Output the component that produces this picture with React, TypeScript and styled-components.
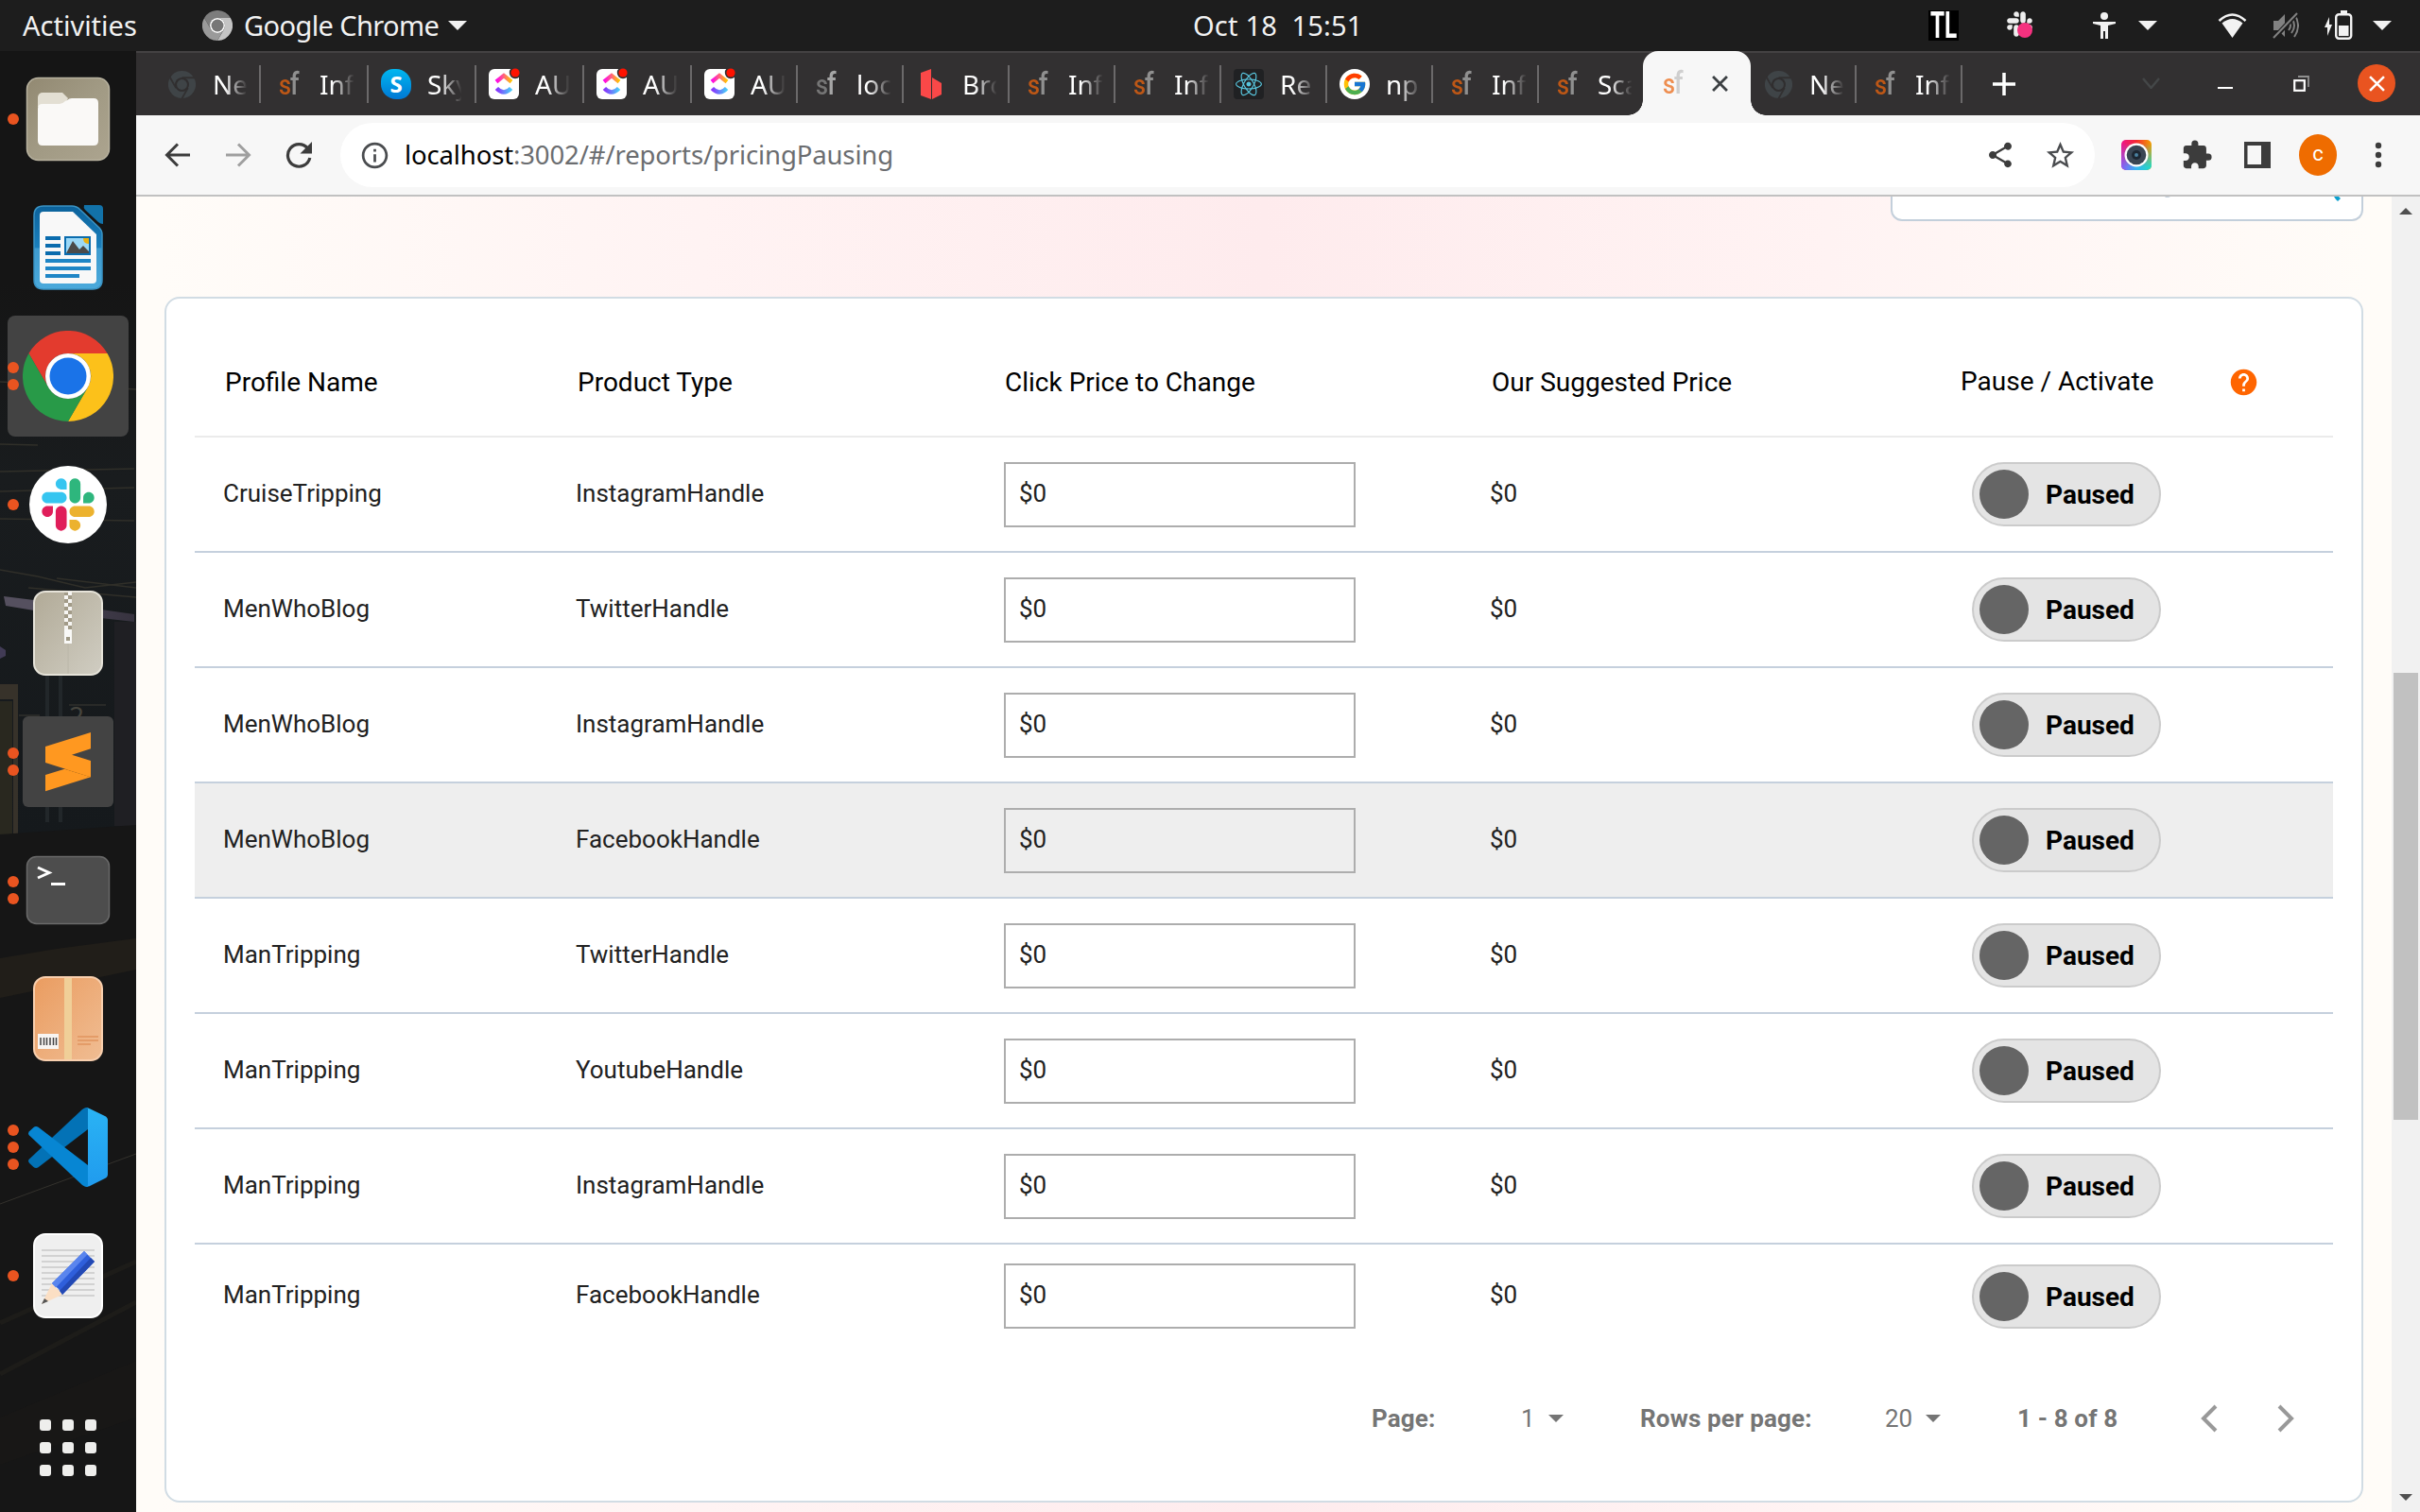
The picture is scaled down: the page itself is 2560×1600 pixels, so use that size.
import React from "react";
import styled, { createGlobalStyle, css } from "styled-components";
import { MdShare, MdStarBorder, MdExtension, MdHelp, MdInfoOutline } from "react-icons/md";
import { FcGoogle } from "react-icons/fc";
import { FaReact } from "react-icons/fa";

const systemFont = `"Noto Sans", "Open Sans", sans-serif`;
const appFont = `Roboto, "Liberation Sans", sans-serif`;

const GlobalStyle = createGlobalStyle`
  * { box-sizing: border-box; }
  body { margin: 0; background: #151515; overflow: hidden; }
  svg { display: block; flex: none; }
`;

const Desktop = styled.div`
  width: 2560px;
  height: 1600px;
  display: grid;
  grid-template-rows: 54px 1546px;
  grid-template-columns: 144px 2416px;
  overflow: hidden;
`;

/* ---------- system bar ---------- */

const SystemBar = styled.header`
  grid-column: 1 / -1;
  display: flex;
  align-items: center;
  background: #1d1d1d;
  color: #f2f2f2;
  font: 400 29px/54px ${systemFont};
  white-space: pre;
`;

const BarItem = styled.div<{ $gap: number; $width?: number; $tracking?: number }>`
  flex: none;
  display: flex;
  align-items: center;
  margin-left: ${(p) => p.$gap}px;
  width: ${(p) => (p.$width ? `${p.$width}px` : "auto")};
  letter-spacing: ${(p) => p.$tracking ?? 0}px;
`;

const TrayBadge = styled.div`
  width: 32px;
  height: 32px;
  background: #000;
  color: #fff;
  display: flex;
  align-items: center;
  justify-content: center;
  font: 700 38px/32px Roboto, sans-serif;
`;

const Squeeze = styled.span`
  transform: scaleX(0.64);
`;

/* ---------- dock ---------- */

const Dock = styled.nav`
  position: relative;
  background: #151515;
  padding-top: 4px;
  display: flex;
  flex-direction: column;
  overflow: hidden;
`;

const Wallpaper = styled.svg`
  position: absolute;
  left: 0;
  top: 0;
`;

const DockItem = styled.div`
  position: relative;
  height: 136px;
  flex: none;
  display: flex;
  align-items: center;
  justify-content: center;
`;

const DockTile = styled.div<{ $size: number }>`
  width: ${(p) => p.$size}px;
  height: ${(p) => p.$size}px;
  border-radius: ${(p) => (p.$size > 100 ? 8 : 6)}px;
  background: #434343;
  display: flex;
  align-items: center;
  justify-content: center;
`;

const RunningDots = styled.div<{ $gap: number }>`
  position: absolute;
  left: 8px;
  top: 0;
  bottom: 0;
  display: flex;
  flex-direction: column;
  justify-content: center;
  gap: ${(p) => p.$gap}px;
`;

const Dot = styled.i`
  width: 12px;
  height: 12px;
  border-radius: 50%;
  background: #e95420;
`;

const AppGrid = styled.div`
  position: relative;
  margin: 84px auto 0;
  display: grid;
  grid-template-columns: repeat(3, 12px);
  gap: 12px;
`;

const AppGridCell = styled.i`
  height: 12px;
  border-radius: 3px;
  background: #eeeeec;
`;

/* ---------- browser frame ---------- */

const Browser = styled.main`
  display: grid;
  grid-template-rows: 68px 86px 1392px;
`;

const TabStrip = styled.div`
  display: flex;
  background: #323031;
  border-top: 2px solid #444243;
  padding-left: 19px;
`;

const TabBox = styled.div<{ $width: number; $divider: boolean }>`
  flex: none;
  width: ${(p) => p.$width}px;
  height: 40px;
  margin-top: 13px;
  padding-left: 12px;
  display: flex;
  align-items: center;
  border-right: 2px solid ${(p) => (p.$divider ? "#6b696a" : "transparent")};
`;

const Favicon = styled.div`
  width: 34px;
  height: 34px;
  margin-right: 16px;
  display: flex;
  align-items: center;
  justify-content: center;
  flex: none;
`;

const TabLabel = styled.span`
  width: 36px;
  overflow: hidden;
  white-space: nowrap;
  color: #fff;
  font: 400 28px/40px ${systemFont};
  mask-image: linear-gradient(90deg, #000 35%, transparent 102%);
`;

const ActiveTab = styled.div`
  position: relative;
  flex: none;
  width: 114px;
  height: 68px;
  margin: -2px 0 0 -1px;
  background: #f7f7f7;
  border-radius: 16px 16px 0 0;
  display: flex;
  align-items: center;
  padding: 0 24px 0 14px;
  justify-content: space-between;
  &::before,
  &::after {
    content: "";
    position: absolute;
    bottom: 0;
    width: 16px;
    height: 16px;
  }
  &::before {
    left: -16px;
    background: radial-gradient(circle at 0 0, transparent 15.5px, #f7f7f7 16px);
  }
  &::after {
    right: -16px;
    background: radial-gradient(circle at 100% 0, transparent 15.5px, #f7f7f7 16px);
  }
`;

const SfMark = styled.span<{ $s: string; $f: string }>`
  font: 500 30px/30px Roboto, sans-serif;
  letter-spacing: -1.5px;
  color: ${(p) => p.$s};
  transform: scaleX(0.84);
  b {
    font: 500 33px/30px Roboto, sans-serif;
    color: ${(p) => p.$f};
  }
`;

const Skype = styled.span`
  width: 32px;
  height: 32px;
  border-radius: 13px 16px;
  background: linear-gradient(#00b7f0, #0078d4);
  color: #fff;
  font: 700 24px/32px "Open Sans", sans-serif;
  text-align: center;
`;

const WindowControls = styled.div`
  display: flex;
  align-items: center;
  margin: 0 26px 2px auto;
`;

const CloseButton = styled.div`
  width: 40px;
  height: 40px;
  border-radius: 50%;
  background: #e95420;
  display: flex;
  align-items: center;
  justify-content: center;
  margin-left: 51px;
`;

const Toolbar = styled.div`
  background: #f7f7f7;
  border-bottom: 2px solid #c1c1c1;
  display: flex;
  align-items: center;
  padding-left: 28px;
`;

const ToolButton = styled.div<{ $width: number }>`
  width: ${(p) => p.$width}px;
  flex: none;
  display: flex;
  justify-content: center;
  color: #3c3c3c;
`;

const Omnibox = styled.div`
  width: 1856px;
  height: 68px;
  border-radius: 34px;
  margin-left: 10px;
  background: #fff;
  display: flex;
  align-items: center;
  padding: 0 19px 0 20px;
  color: #4a4c4f;
`;

const Address = styled.div`
  flex: 1;
  margin-left: 15px;
  font: 400 27.5px/40px ${systemFont};
  letter-spacing: -0.13px;
  color: #6b6d70;
  b {
    font-weight: 400;
    color: #000;
  }
`;

const Avatar = styled.div`
  width: 44px;
  height: 44px;
  border-radius: 50%;
  background: #ef6c00;
  color: #fff;
  font: 400 22px/42px Roboto, sans-serif;
  text-align: center;
`;

/* ---------- page ---------- */

const Viewport = styled.div`
  display: grid;
  grid-template-columns: 2386px 30px;
`;

const Page = styled.section`
  height: 1392px;
  overflow: hidden;
  padding: 0 30px;
  background: linear-gradient(90deg, #fffcf8 1%, #fff3f3 25%, #feebed 50%, #fff3f3 75%, #fffcf8 99%);
  font-family: ${appFont};
  display: flex;
  flex-direction: column;
`;

const FilterBox = styled.div`
  align-self: flex-end;
  width: 500px;
  height: 26px;
  background: #fff;
  border: 2px solid #c3cfdb;
  border-top: 0;
  border-radius: 0 0 12px 12px;
  padding: 0 22px;
  display: flex;
  justify-content: flex-end;
`;

const Card = styled.div`
  margin-top: 80px;
  height: 1276px;
  flex: none;
  background: #fff;
  border: 2px solid #d1dce4;
  border-radius: 16px;
  padding: 0 30px;
`;

const HeaderRow = styled.div`
  height: 147px;
  padding: 69px 0 2px 32px;
  border-bottom: 2px solid #ebebeb;
  display: grid;
  grid-template-columns: 373px 452px 515px 496px 1fr;
  font-size: 28px;
  line-height: 40px;
  color: #000;
`;

const PauseHeader = styled.div`
  display: flex;
  align-items: center;
  height: 38px;
  gap: 79px;
  svg {
    color: #ff6500;
  }
`;

const Row = styled.div<{ $hover?: boolean; $last?: boolean }>`
  height: 122px;
  padding: 26px 0 0 30px;
  display: grid;
  grid-template-columns: 373px 453px 514px 510px 1fr;
  align-items: start;
  border-bottom: 2px solid #c5d0dd;
  background: ${(p) => (p.$hover ? "#eeeeee" : "transparent")};
  ${(p) =>
    p.$last &&
    css`
      padding-top: 20px;
      border-bottom-color: transparent;
    `}
`;

const Cell = styled.div`
  font-size: 26px;
  line-height: 66px;
  color: #212121;
`;

const PriceField = styled.div`
  width: 372px;
  height: 69px;
  border: 2px solid #adadad;
  padding-left: 14px;
  font-size: 26px;
  line-height: 62px;
  color: #212121;
`;

const Toggle = styled.div<{ $last?: boolean }>`
  width: 200px;
  height: 68px;
  margin-top: ${(p) => (p.$last ? 1 : 0)}px;
  border-radius: 34px;
  border: 2px solid #cbcbcb;
  background: #e4e4e4;
  display: flex;
  align-items: center;
  padding-left: 6px;
  gap: 18px;
  font-weight: 700;
  font-size: 28px;
  color: #000;
`;

const Knob = styled.i`
  width: 52px;
  height: 52px;
  border-radius: 50%;
  background: #656565;
`;

const Pager = styled.div`
  display: flex;
  align-items: center;
  justify-content: flex-end;
  height: 60px;
  margin-top: 32px;
  padding-right: 41px;
  color: #757575;
  font-size: 26px;
`;

const PagerText = styled.span<{ $bold?: boolean; $width: number }>`
  width: ${(p) => p.$width}px;
  font-weight: ${(p) => (p.$bold ? 700 : 400)};
  letter-spacing: ${(p) => (p.$bold ? 0.15 : 0)}px;
  white-space: nowrap;
`;

const Scrollbar = styled.div`
  background: #f1f1f1;
  display: flex;
  flex-direction: column;
  align-items: center;
  padding: 12px 0;
`;

const Thumb = styled.div`
  width: 26px;
  height: 473px;
  margin: 485px 0 396px;
  background: #c1c1c1;
`;

/* ---------- drawings ---------- */

const Triangle = ({ w = 20, h = 10, color = "#f2f2f2", up = false }) => (
  <svg width={w} height={h} viewBox="0 0 20 10" preserveAspectRatio="none">
    <path d={up ? "M0 10L10 0L20 10Z" : "M0 0H20L10 10Z"} fill={color} />
  </svg>
);

const ChromeMark = ({ size, colors, seam }: { size: number; colors: string[]; seam?: string }) => (
  <svg width={size} height={size} viewBox="0 0 96 96">
    <path d="M6.4 24A48 48 0 0 1 89.6 24H48A24 24 0 0 0 27.2 60Z" fill={colors[0]} />
    <path d="M89.6 24A48 48 0 0 1 48 96L68.8 60A24 24 0 0 0 48 24Z" fill={colors[1]} />
    <path d="M48 96A48 48 0 0 1 6.4 24L27.2 60A24 24 0 0 0 68.8 60Z" fill={colors[2]} />
    {seam && <path d="M92 24H48M4.400 20L27.200 60M46 100L68.800 60" stroke={seam} strokeWidth="6" fill="none" />}
    <circle cx="48" cy="48" r="24" fill={colors[3]} />
    <circle cx="48" cy="48" r={seam ? 18 : 19.5} fill={colors[4]} />
  </svg>
);

const SlackMark = ({ size, colors }: { size: number; colors: string[] }) => (
  <svg width={size} height={size} viewBox="0 0 127 127">
    <path fill={colors[0]} d="M27.2 80c0 7.3-5.9 13.2-13.2 13.2C6.7 93.2.8 87.3.8 80c0-7.3 5.9-13.2 13.2-13.2h13.2V80zm6.6 0c0-7.3 5.9-13.2 13.2-13.2 7.3 0 13.2 5.9 13.2 13.2v33c0 7.3-5.9 13.2-13.2 13.2-7.3 0-13.2-5.9-13.2-13.2V80z" />
    <path fill={colors[1]} d="M47 27c-7.3 0-13.2-5.9-13.2-13.2C33.8 6.5 39.7.6 47 .6c7.3 0 13.2 5.9 13.2 13.2V27H47zm0 6.7c7.3 0 13.2 5.9 13.2 13.2 0 7.3-5.9 13.2-13.2 13.2H13.9C6.6 60.1.7 54.2.7 46.9c0-7.3 5.9-13.2 13.2-13.2H47z" />
    <path fill={colors[2]} d="M99.9 46.9c0-7.3 5.9-13.2 13.2-13.2 7.3 0 13.2 5.9 13.2 13.2 0 7.3-5.9 13.2-13.2 13.2H99.9V46.9zm-6.6 0c0 7.3-5.9 13.2-13.2 13.2-7.3 0-13.2-5.9-13.2-13.2V13.8C66.9 6.5 72.8.6 80.1.6c7.3 0 13.2 5.9 13.2 13.2v33.1z" />
    <path fill={colors[3]} d="M80.1 99.8c7.3 0 13.2 5.9 13.2 13.2 0 7.3-5.9 13.2-13.2 13.2-7.3 0-13.2-5.9-13.2-13.2V99.8h13.2zm0-6.6c-7.3 0-13.2-5.9-13.2-13.2 0-7.3 5.9-13.2 13.2-13.2h33.1c7.3 0 13.2 5.9 13.2 13.2 0 7.3-5.9 13.2-13.2 13.2H80.1z" />
  </svg>
);

const grayChrome = ["#7d7d7d", "#c4c4c4", "#9a9a9a", "#fff", "#767676"];
const darkChrome = ["#3f4447", "#3f4447", "#3f4447", "#302e2f", "#3f4447"];

const ClickUp = () => (
  <svg width="34" height="34" viewBox="0 0 34 34">
    <defs>
      <linearGradient id="cuTop">
        <stop offset="0" stopColor="#ff02f0" />
        <stop offset="1" stopColor="#ffc800" />
      </linearGradient>
      <linearGradient id="cuBottom">
        <stop offset="0" stopColor="#8930fd" />
        <stop offset="1" stopColor="#49ccf9" />
      </linearGradient>
    </defs>
    <rect x="1" y="1" width="32" height="32" rx="6" fill="#fff" />
    <path d="M9 14.5L17 8L25 14.5" fill="none" stroke="url(#cuTop)" strokeWidth="4.4" />
    <path d="M9.4 21.5Q17 29.500 24.6 21.5" fill="none" stroke="url(#cuBottom)" strokeWidth="4.6" />
    <circle cx="29" cy="5" r="6.2" fill="#323031" />
    <circle cx="29" cy="5" r="4.6" fill="#ff1200" />
  </svg>
);

const BrexMark = () => (
  <svg width="22" height="32" viewBox="0 0 22 32">
    <path d="M0 4L11 0V32L0 28Z" fill="#fa4848" />
    <path d="M12 9L22 15V27L12 32Z" fill="#fa4848" />
  </svg>
);

const ReactTile = () => (
  <svg width="34" height="34" viewBox="0 0 34 34">
    <rect x="1" y="1" width="32" height="32" rx="4" fill="#202123" />
    <FaReact x="3" y="3" size={28} color="#58c4dc" />
  </svg>
);

const GoogleDisc = () => (
  <svg width="34" height="34" viewBox="0 0 34 34">
    <circle cx="17" cy="17" r="16" fill="#fff" />
    <FcGoogle x="3.5" y="3.5" size={27} />
  </svg>
);

const Cross = ({ size, color, width }: { size: number; color: string; width: number }) => (
  <svg width={size} height={size} viewBox="0 0 16 16">
    <path d="M1 1L15 15M15 1L1 15" stroke={color} strokeWidth={width} fill="none" />
  </svg>
);

const FilesIcon = () => (
  <svg width="90" height="90" viewBox="0 0 90 90">
    <defs>
      <linearGradient id="files" x1="0" y1="0" x2="1" y2="1">
        <stop offset="0" stopColor="#928972" />
        <stop offset=".5" stopColor="#a19a84" />
        <stop offset="1" stopColor="#aca48f" />
      </linearGradient>
    </defs>
    <rect x="1.500" y="1.500" width="87" height="87" rx="12" fill="url(#files)" stroke="#b9b3a0" strokeWidth="1.500" />
    <path d="M13 22a5 5 0 0 1 5-5h21l6 6-5 9H13z" fill="#e3dfd3" />
    <path d="M13 34q0-5 5-5h18q3 0 6-3l2-1q2-2 5-2h23q5 0 5 5v40q0 5-5 5H18q-5 0-5-5z" fill="#faf9f7" />
  </svg>
);

const WriterIcon = () => (
  <svg width="74" height="90" viewBox="0 0 74 90">
    <defs>
      <linearGradient id="writer" x1="0" y1="0" x2="0" y2="1">
        <stop offset="0" stopColor="#0c629b" />
        <stop offset=".5" stopColor="#1b80bd" />
        <stop offset=".51" stopColor="#3e9bcf" />
        <stop offset="1" stopColor="#4aa9db" />
      </linearGradient>
    </defs>
    <path d="M11 1H41Q46 1 50 5L70 24Q73 27 73 31V79Q73 89 63 89H11Q1 89 1 79V11Q1 1 11 1Z" fill="url(#writer)" stroke="#3a93c4" strokeWidth="1.5" />
    <path d="M54 0H70Q74 0 74 4V20Q71 20 69 18L55 5Q53 3 54 0Z" fill="#1272a9" />
    <path d="M11 7H42L67 31V79Q67 83 63 83H11Q7 83 7 79V11Q7 7 11 7Z" fill="#f8f8f8" />
    <path d="M13 35H29M13 43H29M13 51H29" stroke="#0a6cae" strokeWidth="4" />
    <path d="M13 59H61M13 67H61M13 75H49" stroke="#1f86c6" strokeWidth="4" />
    <rect x="34" y="34" width="26" height="18" fill="#9bd8f7" stroke="#0a6cae" strokeWidth="2" />
    <path d="M53 35H59V41Q53 41 53 35Z" fill="#eab010" />
    <path d="M35 51L42 38L49 47L53 43L59 49V51Z" fill="#4a4a4a" />
  </svg>
);

const ArchiveIcon = () => (
  <svg width="74" height="90" viewBox="0 0 74 90">
    <defs>
      <linearGradient id="archive" x1="0" y1="0" x2="1" y2="1">
        <stop offset="0" stopColor="#b1aa97" />
        <stop offset="1" stopColor="#d0cdc2" />
      </linearGradient>
    </defs>
    <rect x="1" y="1" width="72" height="88" rx="12" fill="url(#archive)" stroke="#e6e3d9" strokeWidth="2" />
    <path d="M37 54V88" stroke="#bab6a8" />
    <rect x="33" y="2" width="8" height="40" fill="#a29b88" />
    {Array.from({ length: 10 }, (_, i) => (
      <rect key={i} x={i % 2 ? 33 : 37} y={1 + i * 4} width="4" height="4" fill="#f6f5f2" />
    ))}
    <rect x="33" y="41" width="8" height="15" fill="#f9f9f7" />
    <rect x="35" y="49" width="4" height="4" fill="#9f9985" />
  </svg>
);

const SublimeIcon = () => (
  <svg width="96" height="96" viewBox="0 0 96 96">
    <path d="M24 62L44.3 55.7L72 64.3L24 79.3Z" fill="#ff9820" />
    <path d="M44.3 55.7L58 51L72 64.3Z" fill="#e6820c" />
    <path d="M24 32L72 17V34.3L52 40.7L72 47V64.3L24 49Z" fill="#ff9820" />
  </svg>
);

const TerminalIcon = () => (
  <svg width="90" height="74" viewBox="0 0 90 74">
    <rect x="1.500" y="1.500" width="87" height="71" rx="10" fill="#4d4d4d" stroke="#6a6a6a" strokeWidth="1.500" />
    <path d="M13 13L25 18.5L13 24" fill="none" stroke="#fff" strokeWidth="3" />
    <path d="M27 30.5H42" stroke="#fff" strokeWidth="3" />
  </svg>
);

const PackageIcon = () => (
  <svg width="74" height="90" viewBox="0 0 74 90">
    <defs>
      <linearGradient id="package" x1="0" y1="0" x2="1" y2="1">
        <stop offset="0" stopColor="#ea9c60" />
        <stop offset="1" stopColor="#f0bd93" />
      </linearGradient>
    </defs>
    <rect x="1" y="1" width="72" height="88" rx="12" fill="url(#package)" stroke="#f8cfae" strokeWidth="2" />
    <rect x="33" y="2" width="8" height="86" fill="#f0cf98" />
    <rect x="5" y="61" width="22" height="16" fill="#f8f5f2" />
    <path d="M8 65v8M11.5 65v8M14.5 65v8M18 65v8M21.5 65v8M24.5 65v8" stroke="#444" strokeWidth="1.5" />
    <path d="M47 64H69M47 68H69M47 72H61" stroke="#e49c68" strokeWidth="2" />
  </svg>
);

const VsCodeIcon = () => (
  <svg width="84" height="84" viewBox="0 0 84 84">
    <defs>
      <linearGradient id="codeRight" x1="0" y1="0" x2="0" y2="1">
        <stop offset="0" stopColor="#2ab3f4" />
        <stop offset="1" stopColor="#209bee" />
      </linearGradient>
    </defs>
    <path d="M63 0V23L10.500 63.300Q8 65 5.500 63L1 58.800Q-1 56.500 1 54.500L57 2Q60 -.5 63 0Z" fill="#0372b6" />
    <path d="M63 84V61L10.500 20.800Q8 19 5.500 21L1 25.200Q-1 27.500 1 29.600L57 82Q60 84.500 63 84Z" fill="#0786d3" />
    <path d="M63 1Q61 -.5 65 1.200L81 9Q84 10.500 84 13.500V70.500Q84 73.500 81 75L64 83.500Q62 84 63 82Z" fill="url(#codeRight)" />
  </svg>
);

const EditorIcon = () => (
  <svg width="74" height="90" viewBox="0 0 74 90">
    <rect x="1" y="1" width="72" height="88" rx="12" fill="#efefef" stroke="#fff" strokeWidth="2" />
    {Array.from({ length: 9 }, (_, i) => (
      <rect key={i} x="9" y={17 + i * 6} width="56" height="2" fill="#d2d2d2" />
    ))}
    <path d="M9 75L20 53L31 65Z" fill="#fbdfc4" />
    <path d="M9 75L12 69L16 72Z" fill="#555" />
    <path d="M20 53L54 19L65 30L31 65L27 59Z" fill="#2f5fdb" />
    <path d="M20 53L54 19L57.500 22.500L24 57.500Z" fill="#5a85ee" />
    <path d="M28 61L61 26L65 30L31 65Z" fill="#2349b4" />
  </svg>
);

const DockWallpaper = () => (
  <Wallpaper width="144" height="1546" viewBox="0 54 144 1546">
    <defs>
      <linearGradient id="wallA" x1="0" y1="0" x2="0" y2="1">
        <stop offset="0" stopColor="#151515" />
        <stop offset=".35" stopColor="#191c1e" />
        <stop offset="1" stopColor="#15191c" />
      </linearGradient>
      <linearGradient id="glow" x1="0" y1="0" x2="1" y2="0">
        <stop offset="0" stopColor="#4c4658" />
        <stop offset="1" stopColor="#37333f" />
      </linearGradient>
    </defs>
    <rect y="300" width="144" height="590" fill="url(#wallA)" />
    <g stroke="#302f29" strokeWidth="1.500" fill="none">
      <path d="M0 470L40 471M0 499L142 496M0 520L142 516M0 549L142 551M60 612L144 622M0 404L144 412" />
      <path d="M0 603L40 610L90 622L144 616M30 622L144 632" />
    </g>
    <path d="M4 631L36 635V646L6 641Z" fill="#55505f" />
    <path d="M36 635L142 650V658L36 646Z" fill="url(#glow)" />
    <path d="M0 684L6 688V694L0 697Z" fill="#413b55" />
    <rect x="121" y="658" width="23" height="216" fill="#1f1f23" />
    <path d="M50 715V870M64 715V870" stroke="#22272a" strokeWidth="4" />
    <path d="M0 724H19V882H14V740H0Z" fill="#37322a" />
    <path d="M0 742H13V883H0Z" fill="#29281f" />
    <path d="M73 746H112M20 757H42" stroke="#3c3b34" />
    <text x="73" y="768" fontFamily="Noto Sans, sans-serif" fontSize="28" fill="#45443d">2</text>
    <path d="M0 883L144 873V1600H0Z" fill="#161616" />
    <path d="M0 1014L60 1004L144 993V1026L0 1056Z" fill="#211e19" />
    <path d="M0 1274L144 1221" stroke="#34322d" />
    <path d="M0 1400L144 1335M0 1454L144 1378" stroke="#1d1c19" strokeWidth="5" />
    <path d="M0 1500L144 1440V1500L0 1550Z" fill="#181716" />
  </Wallpaper>
);

/* ---------- data ---------- */

const Sf = ({ s = "#bd5716", f = "#8f8f8f" }) => (
  <SfMark $s={s} $f={f}>
    s<b>f</b>
  </SfMark>
);

const darkFavicon = <ChromeMark size={29} colors={darkChrome} seam="#323031" />;

const tabsBefore = [
  { label: "Ne", width: 113, icon: darkFavicon },
  { label: "Inf", width: 114, icon: <Sf /> },
  { label: "Sky", width: 114, icon: <Skype>S</Skype> },
  { label: "AU", width: 114, icon: <ClickUp /> },
  { label: "AU", width: 114, icon: <ClickUp /> },
  { label: "AU", width: 112, icon: <ClickUp /> },
  { label: "loc", width: 112, icon: <Sf s="#757575" f="#a5a5a5" /> },
  { label: "Bro", width: 112, icon: <BrexMark /> },
  { label: "Inf", width: 112, icon: <Sf /> },
  { label: "Inf", width: 112, icon: <Sf /> },
  { label: "Re", width: 112, icon: <ReactTile /> },
  { label: "np", width: 112, icon: <GoogleDisc /> },
  { label: "Inf", width: 112, icon: <Sf /> },
  { label: "Sca", width: 111, icon: <Sf />, last: true },
];

const tabsAfter = [
  { label: "Ne", width: 112, icon: darkFavicon },
  { label: "Inf", width: 112, icon: <Sf /> },
];

const rows = [
  ["CruiseTripping", "InstagramHandle"],
  ["MenWhoBlog", "TwitterHandle"],
  ["MenWhoBlog", "InstagramHandle"],
  ["MenWhoBlog", "FacebookHandle"],
  ["ManTripping", "TwitterHandle"],
  ["ManTripping", "YoutubeHandle"],
  ["ManTripping", "InstagramHandle"],
  ["ManTripping", "FacebookHandle"],
];

const dockApps = [
  { dots: 1, icon: <FilesIcon /> },
  { dots: 0, icon: <WriterIcon /> },
  {
    dots: 2,
    icon: (
      <DockTile $size={128}>
        <ChromeMark size={96} colors={["#e33b2e", "#fcc11a", "#289a48", "#fff", "#1a73e8"]} />
      </DockTile>
    ),
  },
  {
    dots: 1,
    icon: (
      <svg width="82" height="82" viewBox="0 0 82 82">
        <circle cx="41" cy="41" r="41" fill="#fff" />
        <g transform="translate(13 13)">
          <SlackMark size={56} colors={["#e01e5a", "#36c5f0", "#2eb67d", "#ecb22e"]} />
        </g>
      </svg>
    ),
  },
  { dots: 0, icon: <ArchiveIcon /> },
  {
    dots: 2,
    icon: (
      <DockTile $size={96}>
        <SublimeIcon />
      </DockTile>
    ),
  },
  { dots: 2, icon: <TerminalIcon /> },
  { dots: 0, icon: <PackageIcon /> },
  { dots: 3, icon: <VsCodeIcon /> },
  { dots: 1, icon: <EditorIcon /> },
];

type TabData = { label: string; width: number; icon: React.ReactNode; last?: boolean };

const Tab = ({ tab }: { tab: TabData }) => (
  <TabBox $width={tab.width} $divider={!tab.last}>
    <Favicon>{tab.icon}</Favicon>
    <TabLabel>{tab.label}</TabLabel>
  </TabBox>
);

/* ---------- sections ---------- */

const TopPanel = () => (
  <SystemBar>
    <BarItem $gap={24} $width={190}>Activities</BarItem>
    <BarItem $gap={0} $width={44}>
      <ChromeMark size={32} colors={grayChrome} />
    </BarItem>
    <BarItem $gap={0} $width={216} $tracking={-0.6}>Google Chrome</BarItem>
    <BarItem $gap={0} $width={788}>
      <Triangle />
    </BarItem>
    <BarItem $gap={0} $width={778} $tracking={0.2}>Oct 18  15:51</BarItem>
    <BarItem $gap={0} $width={82}>
      <TrayBadge>
        <Squeeze>TL</Squeeze>
      </TrayBadge>
    </BarItem>
    <BarItem $gap={0} $width={92}>
      <svg width="32" height="32" viewBox="0 0 32 32">
        <g transform="translate(1 1)">
          <SlackMark size={27} colors={["#eee", "#eee", "#eee", "#eee"]} />
        </g>
        <circle cx="20" cy="21" r="8" fill="#f5317f" />
      </svg>
    </BarItem>
    <BarItem $gap={0} $width={48}>
      <svg width="24" height="28" viewBox="0 0 24 28">
        <circle cx="12" cy="4" r="4" fill="#f2f2f2" />
        <path d="M0 10H24V12L16 14V28H13V20H11V28H8V14L0 12Z" fill="#f2f2f2" />
      </svg>
    </BarItem>
    <BarItem $gap={0} $width={84}>
      <Triangle />
    </BarItem>
    <BarItem $gap={0} $width={58}>
      <svg width="31" height="26" viewBox="0 0 31 26">
        <path d="M1.500 8Q15.500 -5 29.500 8" stroke="#f2f2f2" strokeWidth="2.500" fill="none" />
        <path d="M4.500 10.500Q15.500 1.500 26.500 10.500L15.500 26Z" fill="#f2f2f2" />
      </svg>
    </BarItem>
    <BarItem $gap={0} $width={55}>
      <svg width="28" height="28" viewBox="0 0 28 28">
        <path d="M1 9H6L13 2V26L6 19H1Z" fill="#828282" />
        <path d="M17 9Q21 14 17 19M20 6Q26 14 20 22M23 2Q31 14 23 26" stroke="#828282" strokeWidth="2" fill="none" />
        <path d="M2 27L26 1" stroke="#1d1d1d" strokeWidth="5" />
        <path d="M1 27L26 1" stroke="#828282" strokeWidth="2" />
      </svg>
    </BarItem>
    <BarItem $gap={0} $width={51}>
      <svg width="30" height="32" viewBox="0 0 30 32">
        <path d="M5 7L0 18H3V27L8 15H5Z" fill="#f2f2f2" />
        <rect x="12.200" y="4.200" width="16" height="25.600" rx="3" fill="none" stroke="#f2f2f2" strokeWidth="2.400" />
        <rect x="17" y="0" width="7" height="4" fill="#f2f2f2" />
        <rect x="15" y="16" width="10.500" height="11" fill="#f2f2f2" />
      </svg>
    </BarItem>
    <BarItem $gap={0}>
      <Triangle />
    </BarItem>
  </SystemBar>
);

const SideDock = () => (
  <Dock>
    <DockWallpaper />
    {dockApps.map((app, i) => (
      <DockItem key={i}>
        {app.icon}
        <RunningDots $gap={6}>
          {Array.from({ length: app.dots }, (_, d) => (
            <Dot key={d} />
          ))}
        </RunningDots>
      </DockItem>
    ))}
    <AppGrid>
      {Array.from({ length: 9 }, (_, i) => (
        <AppGridCell key={i} />
      ))}
    </AppGrid>
  </Dock>
);

const Tabs = () => (
  <TabStrip>
    {tabsBefore.map((tab, i) => (
      <Tab key={i} tab={tab} />
    ))}
    <ActiveTab>
      <Favicon>
        <Sf s="#ee8e50" f="#cfcfcf" />
      </Favicon>
      <Cross size={17} color="#3c4043" width={2.6} />
    </ActiveTab>
    {tabsAfter.map((tab, i) => (
      <Tab key={i} tab={tab} />
    ))}
    <BarItem $gap={32}>
      <svg width="24" height="24" viewBox="0 0 24 24">
        <path d="M12 0V24M0 12H24" stroke="#fff" strokeWidth="3.500" />
      </svg>
    </BarItem>
    <WindowControls>
      <svg width="19" height="12" viewBox="0 0 19 12">
        <path d="M1 1L9.500 11L18 1" stroke="#444748" strokeWidth="2.500" fill="none" />
      </svg>
      <BarItem $gap={61}>
        <svg width="16" height="16" viewBox="0 0 16 16">
          <path d="M0 13H16" stroke="#fff" strokeWidth="2" />
        </svg>
      </BarItem>
      <BarItem $gap={64}>
        <svg width="17" height="17" viewBox="0 0 17 17">
          <path d="M5 1H16V12" stroke="#8f8f8f" strokeWidth="1.800" fill="none" />
          <rect x="1.200" y="5.200" width="10.600" height="10.600" fill="none" stroke="#fff" strokeWidth="2.200" />
        </svg>
      </BarItem>
      <CloseButton>
        <Cross size={17} color="#fff" width={2.4} />
      </CloseButton>
    </WindowControls>
  </TabStrip>
);

const AddressBar = () => (
  <Toolbar>
    <ToolButton $width={32}>
      <svg width="28" height="26" viewBox="0 0 28 26">
        <path d="M27 13H2.500M14 1.500L2.500 13L14 24.500" stroke="#3c3c3c" strokeWidth="3" fill="none" />
      </svg>
    </ToolButton>
    <ToolButton $width={96}>
      <svg width="28" height="26" viewBox="0 0 28 26">
        <path d="M1 13H25.500M14 1.500L25.500 13L14 24.500" stroke="#9f9f9f" strokeWidth="3" fill="none" />
      </svg>
    </ToolButton>
    <ToolButton $width={32}>
      <svg width="28" height="28" viewBox="0 0 28 28">
        <path d="M23.500 7A11.800 11.800 0 1 0 25.800 17" stroke="#3c3c3c" strokeWidth="3.200" fill="none" />
        <path d="M28 0V12.500H15.500Z" fill="#3c3c3c" />
      </svg>
    </ToolButton>
    <ToolButton $width={18} />
    <Omnibox>
      <MdInfoOutline size={33} />
      <Address>
        <b>localhost</b>:3002/#/reports/pricingPausing
      </Address>
      <ToolButton $width={34}>
        <MdShare size={32} />
      </ToolButton>
      <BarItem $gap={29}>
        <MdStarBorder size={35} />
      </BarItem>
    </Omnibox>
    <ToolButton $width={88}>
      <svg width="32" height="32" viewBox="0 0 32 32">
        <defs>
          <linearGradient id="lensTop">
            <stop offset="0" stopColor="#f0128a" />
            <stop offset=".5" stopColor="#f42a32" />
            <stop offset="1" stopColor="#f5a000" />
          </linearGradient>
          <linearGradient id="lensBottom">
            <stop offset="0" stopColor="#8a5cf5" />
            <stop offset=".5" stopColor="#35b4f2" />
            <stop offset="1" stopColor="#22dcc0" />
          </linearGradient>
          <linearGradient id="lensFade" x1="0" y1="0" x2="0" y2="1">
            <stop offset=".1" stopColor="#000" />
            <stop offset=".9" stopColor="#fff" />
          </linearGradient>
          <mask id="lensMask">
            <rect width="32" height="32" fill="url(#lensFade)" />
          </mask>
        </defs>
        <rect width="32" height="32" rx="5" fill="url(#lensTop)" />
        <rect width="32" height="32" rx="5" fill="url(#lensBottom)" mask="url(#lensMask)" />
        <circle cx="16" cy="16" r="12.500" fill="#fff" />
        <circle cx="16" cy="16" r="10.300" fill="#3a4654" />
        <circle cx="16" cy="16" r="5" fill="#1d2733" />
        <circle cx="16" cy="16" r="2" fill="#4a80a0" />
      </svg>
    </ToolButton>
    <ToolButton $width={40}>
      <MdExtension size={34} />
    </ToolButton>
    <ToolButton $width={88}>
      <svg width="28" height="28" viewBox="0 0 28 28">
        <path d="M0 0H28V28H0ZM3.500 4V24H18V4Z" fill="#3c3c3c" fillRule="evenodd" />
      </svg>
    </ToolButton>
    <ToolButton $width={40}>
      <Avatar>c</Avatar>
    </ToolButton>
    <ToolButton $width={88}>
      <svg width="8" height="28" viewBox="0 0 8 28">
        <circle cx="4" cy="4" r="3.200" fill="#3c3c3c" />
        <circle cx="4" cy="14" r="3.200" fill="#3c3c3c" />
        <circle cx="4" cy="24" r="3.200" fill="#3c3c3c" />
      </svg>
    </ToolButton>
  </Toolbar>
);

const PricingTable = () => (
  <Card>
    <HeaderRow>
      <span>Profile Name</span>
      <span>Product Type</span>
      <span>Click Price to Change</span>
      <span>Our Suggested Price</span>
      <PauseHeader>
        Pause / Activate
        <MdHelp size={33} />
      </PauseHeader>
    </HeaderRow>
    {rows.map(([name, type], i) => {
      const last = i === rows.length - 1;
      return (
        <Row key={i} $hover={i === 3} $last={last}>
          <Cell>{name}</Cell>
          <Cell>{type}</Cell>
          <PriceField>$0</PriceField>
          <Cell>$0</Cell>
          <Toggle $last={last}>
            <Knob />
            Paused
          </Toggle>
        </Row>
      );
    })}
    <Pager>
      <PagerText $bold $width={158}>Page:</PagerText>
      <PagerText $width={29}>1</PagerText>
      <PagerText $width={97}>
        <Triangle w={16} h={8} color="#757575" />
      </PagerText>
      <PagerText $bold $width={259}>Rows per page:</PagerText>
      <PagerText $width={43}>20</PagerText>
      <PagerText $width={97}>
        <Triangle w={16} h={8} color="#757575" />
      </PagerText>
      <PagerText $bold $width={193}>1 - 8 of 8</PagerText>
      <svg width="100" height="30" viewBox="0 0 100 30">
        <path d="M17 2L4 15L17 28M84 2L97 15L84 28" stroke="#999" strokeWidth="4" fill="none" />
      </svg>
    </Pager>
  </Card>
);

const App = () => (
  <Desktop>
    <GlobalStyle />
    <TopPanel />
    <SideDock />
    <Browser>
      <Tabs />
      <AddressBar />
      <Viewport>
        <Page>
          <FilterBox>
            <svg width="186" height="5" viewBox="0 0 186 5">
              <path d="M0 0H6L4 1H1Z" fill="#c3cfdb" />
              <path d="M179 0H184L186 2L183 5L181 3Z" fill="#0aa0cf" />
            </svg>
          </FilterBox>
          <PricingTable />
        </Page>
        <Scrollbar>
          <Triangle w={14} h={7} color="#505050" up />
          <Thumb />
          <Triangle w={14} h={7} color="#505050" />
        </Scrollbar>
      </Viewport>
    </Browser>
  </Desktop>
);

export default App;
